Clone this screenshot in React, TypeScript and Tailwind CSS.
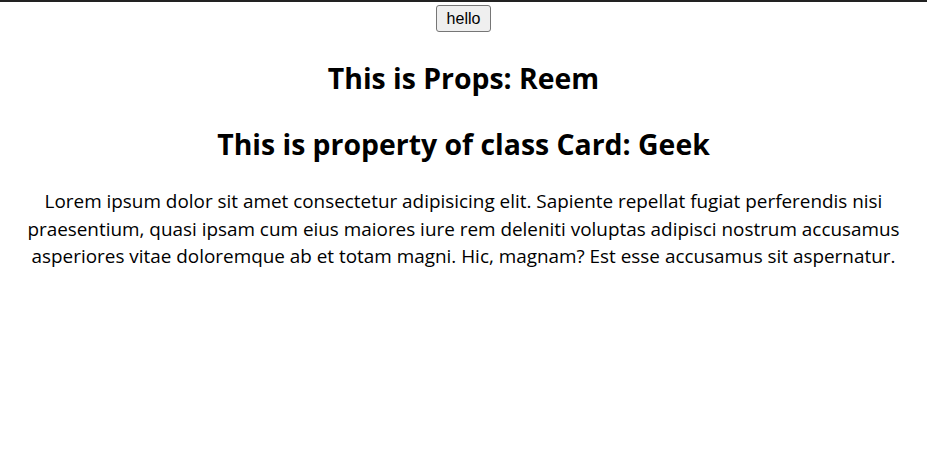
export default function App() {
  return (
    <div className="min-h-screen bg-white border-t-2 border-[#222] text-black" style={{ fontFamily: '"Open Sans", "Noto Sans", sans-serif' }}>
      <div className="flex flex-col items-center text-center">
        <button
          className="mt-[3px] h-[27px] px-[10px] bg-[#efefef] border border-[#767676] rounded-[3px] text-[16px] leading-none"
          style={{ fontFamily: '"Liberation Sans", Arial, sans-serif' }}
        >
          hello
        </button>
        <h2 className="mt-[28px] text-[28.4px] font-bold leading-[36px]">This is Props: Reem</h2>
        <h2 className="mt-[30px] text-[28.4px] font-bold leading-[36px]">This is property of class Card: Geek</h2>
        <p className="mt-[26px] px-[20px] text-[18.9px] leading-[27.6px]">
          Lorem ipsum dolor sit amet consectetur adipisicing elit. Sapiente repellat fugiat perferendis nisi
          praesentium, quasi ipsam cum eius maiores iure rem deleniti voluptas adipisci nostrum accusamus
          asperiores vitae doloremque ab et totam magni. Hic, magnam? Est esse accusamus sit aspernatur.
        </p>
      </div>
    </div>
  )
}
